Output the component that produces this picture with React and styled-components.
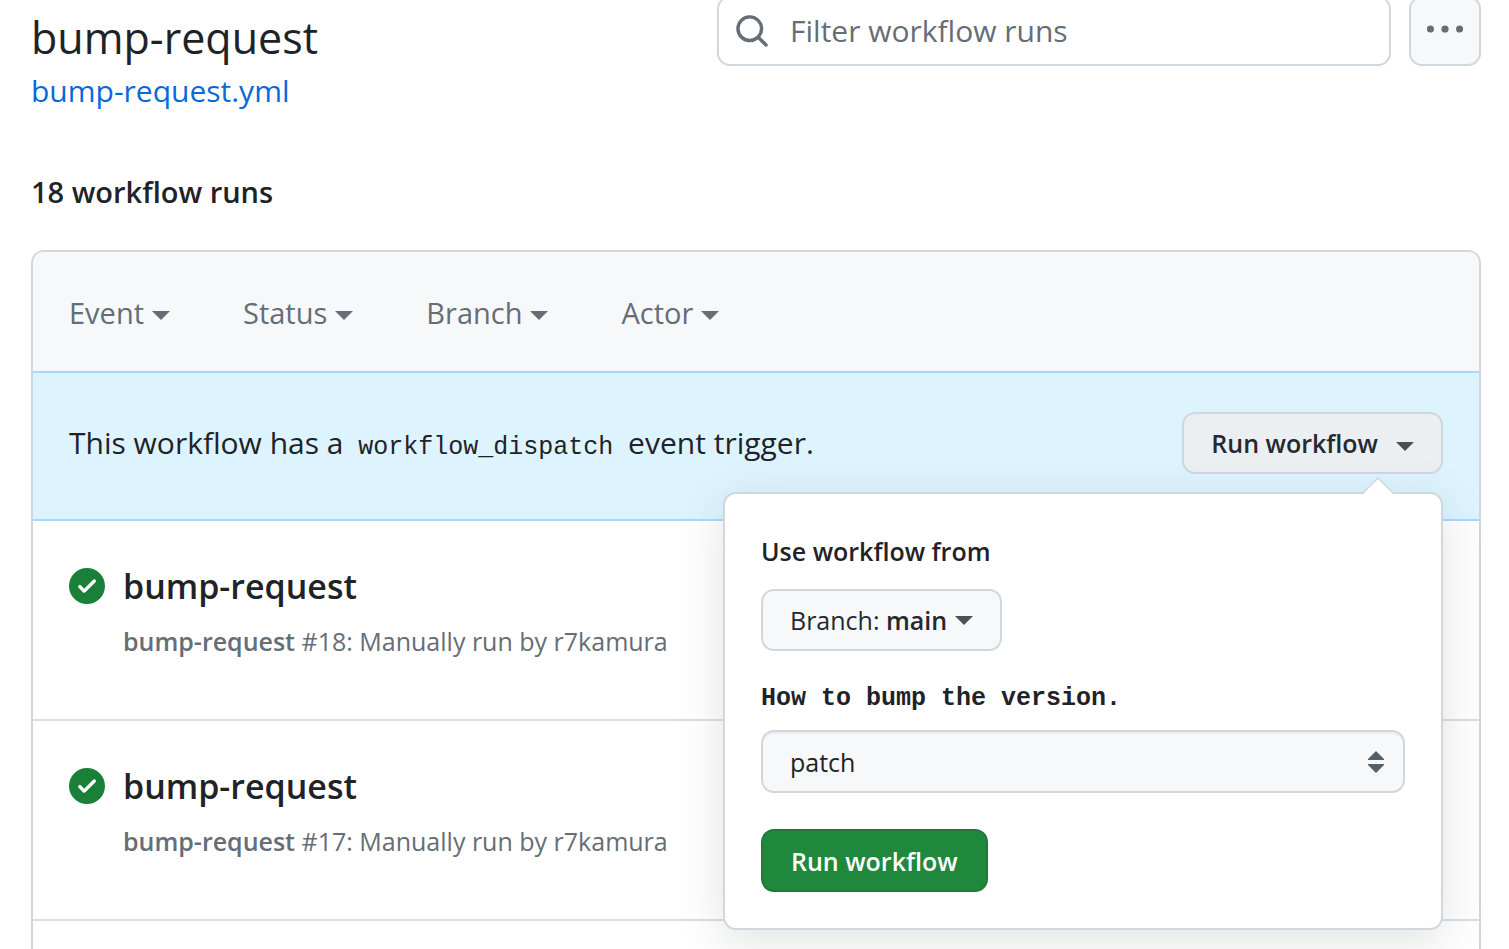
import React from "react";
import styled, { createGlobalStyle } from "styled-components";

const Global = createGlobalStyle`
  *, *::before, *::after { box-sizing: border-box; }
  body {
    margin: 0;
    background: #fff;
    color: #1f2328;
    font-family: "Open Sans", "Noto Sans", sans-serif;
    font-size: 30px;
    line-height: 46px;
  }
  button, input, select { font: inherit; color: inherit; margin: 0; }
`;

const Page = styled.main`
  display: flex;
  flex-direction: column;
  min-height: 100vh;
  padding: 0 28px 0 31px;
`;

const Header = styled.header`
  display: flex;
  justify-content: space-between;
  align-items: flex-start;
`;

const Title = styled.h1`
  margin: 0;
  padding-top: 8px;
  font-size: 43px;
  font-weight: 400;
  line-height: 60px;
`;

const FileLink = styled.a`
  display: block;
  color: #0969da;
  text-decoration: none;
`;

const Tools = styled.div`
  display: flex;
  gap: 18px;
  flex: 0 1 764px;
  margin-top: -4px;
`;

const SearchBox = styled.label`
  display: flex;
  align-items: center;
  flex: 1;
  gap: 20px;
  height: 70px;
  padding: 0 15px;
  border: 2px solid #d0d7de;
  border-radius: 13px;
  color: #656d76;
`;

const SearchInput = styled.input`
  flex: 1;
  min-width: 0;
  padding: 0;
  border: 0;
  outline: 0;
  background: transparent;
  &::placeholder { color: #656d76; opacity: 1; }
`;

const Button = styled.button`
  display: inline-flex;
  align-items: center;
  justify-content: center;
  gap: ${(p) => p.$gap || 0}px;
  height: ${(p) => p.$height || 62}px;
  padding: 0 ${(p) => (p.$square ? 16 : p.$primary ? 28 : 27)}px;
  border: 2px solid ${(p) => (p.$primary ? "#1f7a3a" : "#d0d7de")};
  border-radius: 13px;
  background: ${(p) => (p.$primary ? "#1f883d" : p.$active ? "#ebeff2" : "#f6f8fa")};
  color: ${(p) => (p.$primary ? "#fff" : p.$square ? "#656d76" : "#24292f")};
  font-size: 25px;
  font-weight: ${(p) => (p.$regular ? 400 : 600)};
  line-height: 40px;
  white-space: nowrap;
  b { font-weight: 600; }
`;

const Count = styled.h2`
  margin: 55px 0 35px;
  font-size: 29px;
  font-weight: 600;
  line-height: 46px;
`;

const Box = styled.section`
  flex: 1;
  border: 2px solid #d0d7de;
  border-bottom: 0;
  border-radius: 13px 13px 0 0;
`;

const Filters = styled.div`
  display: flex;
  align-items: center;
  gap: 73px;
  height: 119px;
  padding: 2px 36px 0;
  border-radius: 11px 11px 0 0;
  background: #f6f8fa;
`;

const Filter = styled.button`
  display: flex;
  align-items: center;
  gap: 8px;
  padding: 0;
  border: 0;
  background: none;
  color: #656d76;
  font-size: 29px;
`;

const Caret = styled.span`
  border: 9px solid transparent;
  border-top-color: ${(p) => p.$color || "currentColor"};
  border-bottom: 0;
  margin-top: ${(p) => (p.$raised ? 0 : 6)}px;
`;

const Banner = styled.div`
  display: flex;
  align-items: flex-start;
  justify-content: space-between;
  height: 150px;
  padding: 39px 36px;
  border: solid #a6d8ff;
  border-width: 2px 0;
  background: #ddf4ff;
`;

const Message = styled.p`
  margin: 0;
  padding-top: 8px;
`;

const Code = styled.code`
  padding: 0 7px;
  font-family: "Liberation Mono", monospace;
  font-size: 25px;
`;

const Dispatch = styled.div`
  position: relative;
`;

const Popover = styled.form`
  position: absolute;
  z-index: 1;
  top: 80px;
  right: 0;
  width: 720px;
  padding: 36px;
  display: flex;
  flex-direction: column;
  align-items: flex-start;
  border: 2px solid #d0d7de;
  border-radius: 13px;
  background: #fff;
  box-shadow: 0 12px 48px rgba(66, 74, 83, 0.16);
`;

const Pointer = styled.svg`
  position: absolute;
  top: -17px;
  right: 46px;
`;

const Label = styled.label`
  margin-bottom: 17px;
  font-size: 25px;
  font-weight: 600;
  line-height: 42px;
`;

const CodeLabel = styled.label`
  margin: 28px 0 11px;
  font-family: "Liberation Mono", monospace;
  font-size: 25px;
  font-weight: 700;
  line-height: 40px;
`;

const SelectWrap = styled.div`
  position: relative;
  width: 100%;
  margin-bottom: 36px;
`;

const Select = styled.select`
  display: block;
  width: 100%;
  height: 63px;
  padding: 0 60px 0 27px;
  appearance: none;
  border: 2px solid #d0d7de;
  border-radius: 13px;
  background: #f6f8fa;
  box-shadow: inset 0 2px 0 rgba(208, 215, 222, 0.3);
  font-size: 25px;
`;

const Arrows = styled.svg`
  position: absolute;
  top: 20px;
  right: 20px;
  pointer-events: none;
`;

const Runs = styled.ul`
  margin: 0;
  padding: 0;
  list-style: none;
`;

const Run = styled.li`
  display: flex;
  align-items: flex-start;
  gap: 18px;
  height: 200px;
  padding: 38px 36px;
  border-bottom: 2px solid #d8dee4;
`;

const StatusIcon = styled.svg`
  flex: none;
  margin-top: 9px;
`;

const RunTitle = styled.a`
  display: block;
  color: inherit;
  font-size: 34px;
  font-weight: 600;
  line-height: 54px;
  text-decoration: none;
`;

const RunMeta = styled.div`
  color: #656d76;
  font-size: 25px;
  line-height: 56px;
  b { font-weight: 600; }
`;

const filters = ["Event", "Status", "Branch", "Actor"];
const runs = [18, 17];

export default function App() {
  return (
    <>
      <Global />
      <Page>
        <Header>
          <div>
            <Title>bump-request</Title>
            <FileLink href="#file">bump-request.yml</FileLink>
          </div>
          <Tools>
            <SearchBox>
              <svg width="36" height="36" viewBox="0 0 16 16" fill="currentColor" aria-hidden="true">
                <path d="M10.68 11.74a6 6 0 0 1-7.922-8.982 6 6 0 0 1 8.982 7.922l3.04 3.04a.749.749 0 0 1-.326 1.275.749.749 0 0 1-.734-.215ZM11.5 7a4.499 4.499 0 1 0-8.997 0A4.499 4.499 0 0 0 11.5 7Z" />
              </svg>
              <SearchInput aria-label="Filter workflow runs" placeholder="Filter workflow runs" />
            </SearchBox>
            <Button type="button" $square $height={70} aria-label="Show workflow options">
              <svg width="36" height="36" viewBox="0 0 16 16" fill="currentColor" aria-hidden="true">
                <circle cx="1.5" cy="7.1" r="1.6" />
                <circle cx="8" cy="7.1" r="1.6" />
                <circle cx="14.5" cy="7.1" r="1.6" />
              </svg>
            </Button>
          </Tools>
        </Header>

        <Count>18 workflow runs</Count>

        <Box>
          <Filters>
            {filters.map((name) => (
              <Filter key={name} type="button">
                {name}
                <Caret />
              </Filter>
            ))}
          </Filters>

          <Banner>
            <Message>
              This workflow has a <Code>workflow_dispatch</Code> event trigger.
            </Message>
            <Dispatch>
              <Button type="button" $active $gap={18} aria-expanded="true">
                Run workflow
                <Caret $color="#4b5056" />
              </Button>
              <Popover onSubmit={(e) => e.preventDefault()}>
                <Pointer width="34" height="18" viewBox="0 0 34 18" aria-hidden="true">
                  <path d="M1 17 17 1l16 16v1H1Z" fill="#fff" />
                  <path d="M1 17 17 1l16 16" fill="none" stroke="#d0d7de" strokeWidth="1.5" />
                </Pointer>
                <Label htmlFor="branch">Use workflow from</Label>
                <Button id="branch" type="button" $regular $gap={8}>
                  <span>
                    Branch: <b>main</b>
                  </span>
                  <Caret $raised $color="#4b5056" />
                </Button>
                <CodeLabel htmlFor="bump">How to bump the version.</CodeLabel>
                <SelectWrap>
                  <Select id="bump" defaultValue="patch">
                    <option>patch</option>
                    <option>minor</option>
                    <option>major</option>
                  </Select>
                  <Arrows width="18" height="24" viewBox="0 0 18 24" fill="#57606a" aria-hidden="true">
                    <path d="M9 1l8 8v1H1V9ZM9 23l8-8v-1H1v1Z" />
                  </Arrows>
                </SelectWrap>
                <Button type="submit" $primary $height={63}>
                  Run workflow
                </Button>
              </Popover>
            </Dispatch>
          </Banner>

          <Runs>
            {runs.map((number) => (
              <Run key={number}>
                <StatusIcon width="36" height="36" viewBox="0 0 16 16" fill="#1a7f37" role="img" aria-label="completed successfully">
                  <path d="M8 16A8 8 0 1 1 8 0a8 8 0 0 1 0 16Zm3.78-9.72a.751.751 0 0 0-.018-1.042.751.751 0 0 0-1.042-.018L6.75 9.19 5.28 7.72a.751.751 0 0 0-1.042.018.751.751 0 0 0-.018 1.042l2 2a.75.75 0 0 0 1.06 0Z" />
                </StatusIcon>
                <div>
                  <RunTitle href={`#run-${number}`}>bump-request</RunTitle>
                  <RunMeta>
                    <b>bump-request</b> #{number}: Manually run by r7kamura
                  </RunMeta>
                </div>
              </Run>
            ))}
          </Runs>
        </Box>
      </Page>
    </>
  );
}
